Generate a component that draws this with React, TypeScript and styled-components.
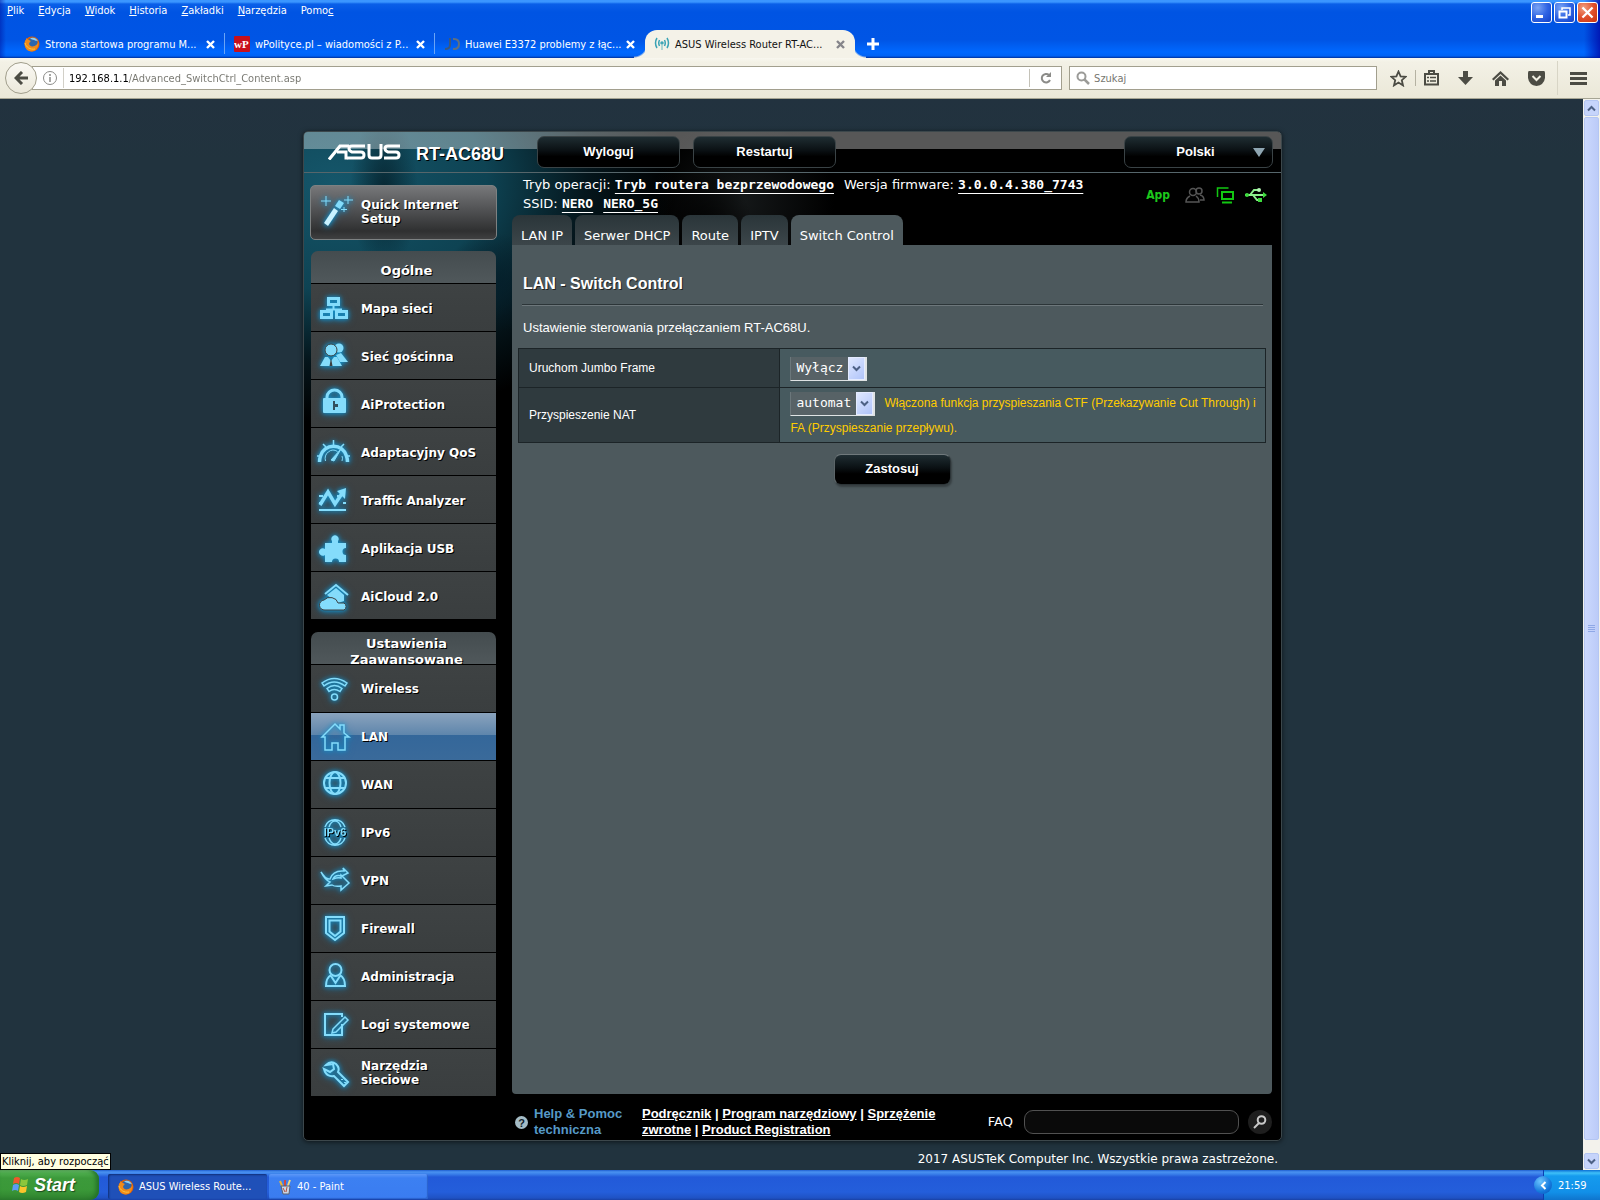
import React from "react";
import styled, { createGlobalStyle, css } from "styled-components";

const ui = `"DejaVu Sans Condensed", "Noto Sans", sans-serif`;
const wide = `"DejaVu Sans", sans-serif`;
const arial = `"Liberation Sans", Arial, sans-serif`;
const mono = `"DejaVu Sans Mono", monospace`;

const Global = createGlobalStyle`
  * { box-sizing: border-box; }
  html, body { margin: 0; height: 100%; }
  body { background: #21333e; overflow: hidden; font-family: ${ui}; }
  button, input, select { font: inherit; color: inherit; margin: 0; padding: 0; border: 0; background: none; }
  button { cursor: pointer; }
  svg { display: block; flex: none; }
`;

const Screen = styled.div`
  display: flex;
  flex-direction: column;
  height: 100vh;
  font-size: 11px;
`;

/* ---------- browser chrome ---------- */

const TitleBar = styled.header`
  position: relative;
  display: flex;
  flex-direction: column;
  justify-content: space-between;
  height: 58px;
  flex: none;
  color: #fff;
  background:
    linear-gradient(90deg, rgba(0, 20, 160, 0.5) 0, rgba(0, 20, 160, 0) 6px, rgba(0, 20, 160, 0) calc(100% - 16px), rgba(0, 10, 170, 0.8) 100%),
    linear-gradient(#3b96ff 0, #3b96ff 2px, #0a5fe8 4px, #0054e3 12px, #0055e5 40px, #0068ff 52px, #0062f5 56px, #00309c 58px);
`;

const MenuBar = styled.nav`
  display: flex;
  align-items: center;
  height: 22px;
  padding-left: 7px;
  gap: 14px;
`;

const MenuButton = styled.button`
  line-height: 16px;
  u { text-underline-offset: 1px; }
`;

const WindowButtons = styled.div`
  position: absolute;
  top: 2px;
  right: 2px;
  display: flex;
  gap: 2px;
`;

const WindowButton = styled.button<{ $danger?: boolean }>`
  display: grid;
  place-items: center;
  width: 21px;
  height: 21px;
  border: 1px solid #fff;
  border-radius: 3px;
  background: ${(p) => (p.$danger ? "radial-gradient(circle at 30% 25%, #f0a080, #e0502c 50%, #c83410)" : "radial-gradient(circle at 30% 25%, #7aa4f4, #3065e4 50%, #1040c8)")};
`;

const TabStrip = styled.div`
  display: flex;
  align-items: flex-end;
  height: 28px;
  padding-left: 15px;
`;

const BrowserTab = styled.div<{ $active?: boolean; $line?: boolean }>`
  position: relative;
  display: flex;
  align-items: center;
  gap: 5px;
  width: 210px;
  height: 28px;
  padding: 0 10px 0 9px;
  ${(p) =>
    p.$line &&
    css`
      &::after {
        content: "";
        position: absolute;
        right: 0;
        top: 3px;
        width: 1px;
        height: 21px;
        background: #6aa4f6;
      }
    `}
  ${(p) =>
    p.$active &&
    css`
      color: #111;
      background: #f4f2e8;
      border-radius: 12px 12px 0 0;
      &::before, &::after {
        content: "";
        position: absolute;
        bottom: 0;
        width: 11px;
        height: 14px;
      }
      &::before { left: -11px; background: radial-gradient(circle at 0 0, transparent 12px, #f4f2e8 14px); }
      &::after { right: -11px; background: radial-gradient(circle at 100% 0, transparent 12px, #f4f2e8 14px); }
    `}
`;

const TabTitle = styled.a`
  flex: 1;
  min-width: 0;
  color: inherit;
  text-decoration: none;
  white-space: nowrap;
`;

const IconButton = styled.button<{ $tone?: string }>`
  display: grid;
  place-items: center;
  flex: none;
  color: ${(p) => p.$tone ?? "#4c4c44"};
`;

const NewTab = styled(IconButton)`
  height: 28px;
  padding-left: 12px;
`;

const NavBar = styled.div`
  display: flex;
  align-items: center;
  flex: none;
  height: 41px;
  padding: 0 13px 0 5px;
  border-bottom: 1px solid #a6a594;
  background: linear-gradient(#f8f7f0 0, #f3f1e6 4px, #ebe8d8 100%);
`;

const BackButton = styled.button`
  display: grid;
  place-items: center;
  flex: none;
  width: 32px;
  height: 32px;
  margin-right: -5px;
  border: 1px solid #a19e8c;
  border-radius: 50%;
  background: linear-gradient(#faf9f4, #ebe8da);
  z-index: 1;
`;

const Field = styled.div<{ $grow: number }>`
  display: flex;
  align-items: center;
  flex: ${(p) => p.$grow} 1 0;
  height: 24px;
  border: 1px solid #a29f8e;
  background: #fff;
`;

const AddressField = styled(Field)`
  padding-left: 10px;
  margin-right: 7px;
`;

const Address = styled.input`
  flex: 1;
  height: 20px;
  margin-left: 6px;
  padding-left: 5px;
  border-left: 1px solid #d2d0c8;
  outline: none;
  color: transparent;
  background: linear-gradient(90deg, #000 65px, #75756e 65px);
  background-clip: text;
`;

const Reload = styled(IconButton)`
  width: 32px;
  height: 18px;
  border-left: 1px solid #c4c2b8;
`;

const SearchField = styled(Field)`
  padding-left: 6px;
  gap: 4px;
`;

const SearchInput = styled.input`
  flex: 1;
  outline: none;
  &::placeholder { color: #76766f; opacity: 1; }
`;

const NavTools = styled.div`
  display: flex;
  align-items: center;
  gap: 19px;
  margin-left: 13px;
`;

const ToolDivider = styled.span<{ $tall?: boolean }>`
  width: 1px;
  height: ${(p) => (p.$tall ? 34 : 16)}px;
  margin: 0 ${(p) => (p.$tall ? -7 : -11)}px;
  background: ${(p) => (p.$tall ? "#d8d5c6" : "#b5b2a2")};
`;

/* ---------- page viewport ---------- */

const Viewport = styled.div`
  flex: 1;
  min-height: 0;
  display: flex;
`;

const Page = styled.main`
  flex: 1;
  min-width: 0;
  overflow: hidden;
  padding: 32px 0 0 2px;
  background: linear-gradient(#22323f 0, #21333e 60px);
`;

const Scrollbar = styled.div`
  display: flex;
  flex-direction: column;
  gap: 1px;
  width: 17px;
  padding: 1px;
  background: #f3f2ec;
`;

const ScrollButton = styled.button`
  display: grid;
  place-items: center;
  height: 16px;
  border: 1px solid #b4c6f2;
  border-radius: 2px;
  color: #4d6185;
  background: #c6d4fb;
`;

const ScrollThumb = styled.div`
  display: grid;
  place-items: center;
  flex: 1;
  margin-bottom: 12px;
  border: 1px solid #b4c6f2;
  border-radius: 2px;
  background: linear-gradient(90deg, #cbd8fd, #bccbf8);
`;

/* ---------- router panel ---------- */

const Router = styled.section`
  width: 979px;
  max-width: 100%;
  margin: 0 auto;
  border: 1px solid #3c474b;
  border-radius: 5px;
  color: #fff;
  box-shadow: 0 1px 5px rgba(0, 0, 0, 0.6);
  background:
    radial-gradient(ellipse 34px 80px at 80px 60px, rgba(2, 20, 28, 0.7), transparent),
    radial-gradient(ellipse 50px 50px at 190px 150px, rgba(4, 30, 42, 0.8), transparent),
    radial-gradient(ellipse 50px 60px at 400px 100px, rgba(0, 0, 0, 0.8), transparent),
    radial-gradient(ellipse 340px 240px at 30px 50px, #15566a 0, #0e4353 45%, rgba(6, 28, 36, 0.75) 75%, transparent 100%),
    radial-gradient(circle at 440px 70px, #141718 0, transparent 90px),
    #000;
`;

const RouterHeader = styled.div`
  display: flex;
  align-items: center;
  height: 41px;
  padding: 0 8px 0 24px;
  border-bottom: 1px solid #56666b;
  border-radius: 4px 4px 0 0;
  background: linear-gradient(rgba(255, 255, 255, 0.34) 17px, transparent 17px);
`;

const Model = styled.h1`
  width: 121px;
  margin: 3px 0 0 15px;
  font: bold 18px/20px ${arial};
  text-shadow: 1px 1px 0 #000;
`;

const DarkButton = styled.button<{ $width: number }>`
  width: ${(p) => p.$width}px;
  height: 32px;
  border: 1px solid #3a4346;
  border-radius: 7px;
  font: bold 13px/16px ${arial};
  background: linear-gradient(#1f2d32 0, #0a1013 45%, #000 65%);
  text-shadow: 1px 1px 0 #000;
`;

const HeaderButton = styled(DarkButton)`
  margin-right: 13px;
`;

const LanguageBox = styled.div`
  position: relative;
  margin-left: auto;
  svg { position: absolute; right: 8px; top: 12px; pointer-events: none; }
`;

const Language = styled.select`
  appearance: none;
  width: 149px;
  height: 32px;
  padding-right: 6px;
  border: 1px solid #3a4346;
  border-radius: 7px;
  text-align: center;
  text-align-last: center;
  font: bold 13px/16px ${arial};
  background: linear-gradient(#1f2d32 0, #0a1013 45%, #000 65%);
`;

const RouterBody = styled.div`
  display: flex;
  gap: 15px;
  padding: 0 9px 0 6px;
`;

const Sidebar = styled.nav`
  flex: none;
  width: 187px;
  padding: 12px 0 44px;
  font: bold 12px/14px ${wide};
  text-shadow: 1px 1px 0 #000;
`;

const SetupLink = styled.a`
  display: flex;
  align-items: center;
  gap: 8px;
  height: 55px;
  margin-bottom: 11px;
  padding: 0 0 2px 8px;
  border: 1px solid #7d8182;
  border-radius: 5px;
  color: #fff;
  text-decoration: none;
  background: linear-gradient(#77787a, #555658 40%, #2f3031 85%, #3f4041);
`;

const MenuGroup = styled.section<{ $drop: number }>`
  margin: 0 1px;
  > a { padding-top: ${(p) => p.$drop}px; }
  & + & { margin-top: 13px; }
`;

const MenuHeading = styled.h2<{ $two?: boolean }>`
  height: 32px;
  margin: 0;
  padding: ${(p) => (p.$two ? 4 : 12)}px 26px 0 32px;
  border-radius: 7px 7px 0 0;
  font: bold 13px/16px ${wide};
  text-align: center;
  background: linear-gradient(#444c4f, #50585b);
`;

const MenuItem = styled.a<{ $active?: boolean }>`
  display: flex;
  align-items: center;
  gap: 10px;
  height: 48px;
  padding: 0 10px 0 6px;
  border-top: 1px solid #000;
  color: #fff;
  text-decoration: none;
  background: ${(p) => (p.$active ? "linear-gradient(#8aa3bd 0, #5f86ac 46%, #34679a 47%, #3a6a9a 100%)" : "linear-gradient(#3e4243, #3a3e3f)")};
  span { max-width: 120px; }
`;

const Glow = styled.svg`
  overflow: visible;
  color: #84dcfb;
  filter: drop-shadow(0 0 2px #1296cf) drop-shadow(0 1px 3px rgba(18, 130, 190, 0.7));
`;

const Main = styled.div`
  display: flex;
  flex: 1;
  min-width: 0;
  flex-direction: column;
`;

const InfoBar = styled.div`
  display: flex;
  justify-content: space-between;
  height: 42px;
  padding: 2px 5px 0 11px;
`;

const InfoText = styled.div`
  font: 13px/19px ${wide};
  white-space: nowrap;
`;

const InfoLink = styled.a<{ $gap?: boolean }>`
  margin-right: ${(p) => (p.$gap ? 10 : 0)}px;
  color: #fff;
  font: bold 13px/16px ${mono};
  text-underline-offset: 4px;
  text-decoration-skip-ink: none;
`;

const StatusIcons = styled.div`
  display: flex;
  align-items: center;
  gap: 11px;
`;

const AppLink = styled.a`
  margin-right: 4px;
  color: #1cc81c;
  font: bold 12px/16px ${ui};
  text-decoration: none;
`;

const PageTabs = styled.div`
  display: flex;
  gap: 3px;
  height: 30px;
`;

const PageTab = styled.a<{ $active?: boolean }>`
  padding: 11px 9px 0;
  border-radius: 8px 8px 0 0;
  color: #fff;
  font: 13px/19px ${wide};
  text-decoration: none;
  white-space: nowrap;
  background: ${(p) => (p.$active ? "#4d595d" : "linear-gradient(#2a3539, #3c464a)")};
`;

const Panel = styled.section`
  flex: 1;
  padding: 29px 6px 0;
  border-radius: 0 0 4px 4px;
  background: #4d595d;
`;

const PanelTitle = styled.h2`
  margin: 0 3px 15px 4px;
  padding: 0 0 10px 1px;
  border-bottom: 1px solid #2c3538;
  box-shadow: 0 1px 0 #6d777b;
  font: bold 16px/20px ${arial};
  text-shadow: 1px 1px 0 #222;
`;

const Description = styled.p`
  margin: 0 0 12px 5px;
  font: 13px/16px ${arial};
`;

const Settings = styled.table`
  width: 100%;
  border-collapse: collapse;
  font: 12px/24px ${arial};
  th, td { border: 1px solid #1c2427; padding: 7px 5px 6px 10px; text-align: left; font-weight: normal; }
  th { width: 35%; background: #2f3a3e; }
  td { background: #475a5f; }
  tr:last-child td { padding-top: 3px; padding-bottom: 2px; }
`;

const Picker = styled.span`
  position: relative;
  display: inline-flex;
  height: 24px;
  margin-right: 9px;
  vertical-align: middle;
`;

const PickerSelect = styled.select`
  appearance: none;
  height: 24px;
  padding: 0 22px 0 5px;
  border: solid #dfe3e4;
  border-width: 0 2px 1px 1px;
  border-left-color: #6b777b;
  font: 13px/20px ${mono};
  background: #576266;
`;

const PickerArrow = styled.span`
  position: absolute;
  right: 2px;
  top: 0;
  display: grid;
  place-items: center;
  width: 17px;
  height: 23px;
  border: 1px solid #e4ebff;
  color: #4d6185;
  background: linear-gradient(135deg, #dfe8ff, #b0c4fa);
  pointer-events: none;
`;

const Hint = styled.span`
  color: #fc0;
`;

const Actions = styled.div`
  display: flex;
  justify-content: center;
  padding-top: 11px;
`;

const ApplyButton = styled(DarkButton)`
  height: 31px;
  border-color: #70797c #2c3437 #2c3437 #5c6568;
  box-shadow: 1px 2px 2px rgba(0, 0, 0, 0.3);
`;

const Footer = styled.footer`
  display: flex;
  align-items: center;
  height: 46px;
  padding: 10px 0 0 3px;
  font: bold 13px/16px ${arial};
`;

const Help = styled.span`
  width: 98px;
  margin: 0 10px 0 6px;
  color: #569ac7;
`;

const FooterLinks = styled.div`
  width: 310px;
  a { color: #fff; }
`;

const FaqLabel = styled.label`
  display: flex;
  align-items: center;
  gap: 11px;
  margin-left: auto;
  font: 13px/16px ${wide};
`;

const FaqInput = styled.input`
  width: 215px;
  height: 24px;
  padding: 0 10px;
  border: 1px solid #515151;
  border-radius: 9px;
  outline: none;
  background: #0a0a0a;
`;

const RoundButton = styled.button`
  display: grid;
  place-items: center;
  width: 24px;
  height: 24px;
  margin-left: 9px;
  border-radius: 50%;
  color: #c9c9c9;
  background: #1e1e1e;
`;

const Copyright = styled.p`
  width: 979px;
  max-width: 100%;
  margin: 10px auto 0;
  padding-right: 4px;
  color: #fff;
  text-align: right;
  font: 12px/16px ${wide};
`;

/* ---------- desktop taskbar ---------- */

const Taskbar = styled.footer`
  position: relative;
  display: flex;
  flex: none;
  height: 30px;
  color: #fff;
  background: linear-gradient(#1f5fd0 0, #4a92f0 2px, #3a80ea 4px, #225ad9 7px, #245edb 22px, #1f52c4 28px, #1941a5 30px);
`;

const Tooltip = styled.div`
  position: absolute;
  left: 0;
  top: -17px;
  height: 17px;
  padding: 0 1px;
  border: 1px solid #000;
  color: #000;
  line-height: 15px;
  background: #ffffe1;
`;

const StartButton = styled.button`
  display: flex;
  align-items: center;
  gap: 5px;
  width: 99px;
  padding-left: 11px;
  border-radius: 0 9px 9px 0;
  font: italic bold 18px/24px ${arial};
  text-shadow: 1px 1px 1px #1c4a1c;
  background: linear-gradient(#7cc97a 0, #4fae4e 3px, #3c9a3b 8px, #3a9838 20px, #2f802e 30px);
  box-shadow: inset -3px 0 4px #23702a;
`;

const TaskButton = styled.button<{ $pressed?: boolean }>`
  display: flex;
  align-items: center;
  gap: 5px;
  width: 159px;
  height: 25px;
  margin: 4px 1px 0 1px;
  padding-left: 10px;
  border-radius: 2px;
  background: ${(p) => (p.$pressed ? "#1f50b8" : "linear-gradient(#5c98f8, #3c80f2 4px, #3a7cf0)")};
  box-shadow: ${(p) => (p.$pressed ? "inset 1px 1px 2px #102f78" : "inset -1px -1px 1px #2a62cc")};
`;

const TaskList = styled.div`
  display: flex;
  flex: 1;
  padding-left: 8px;
`;

const Tray = styled.div`
  display: flex;
  align-items: center;
  gap: 6px;
  width: 57px;
  border-left: 1px solid #0c3fb0;
  background: linear-gradient(#0c6fd6 0, #3fc0f8 3px, #159bee 6px, #1290e8 22px, #0f74cc 30px);
`;

const TrayArrow = styled.button`
  display: grid;
  place-items: center;
  width: 18px;
  height: 18px;
  margin-left: -10px;
  border-radius: 50%;
  background: radial-gradient(circle at 35% 30%, #6cc4ff, #1478dc 60%, #0a50b0);
`;

/* ---------- small drawings ---------- */

const Cross = ({ size = 9, width = 2.4 }: { size?: number; width?: number }) => (
  <svg width={size} height={size} viewBox="0 0 9 9" stroke="currentColor" strokeWidth={width}>
    <path d="M1 1l7 7M8 1l-7 7" />
  </svg>
);

const Firefox = () => (
  <svg width="16" height="16" viewBox="0 0 16 16">
    <circle cx="8" cy="8" r="7.500" fill="#e66000" />
    <circle cx="8.500" cy="6.500" r="5" fill="#2c66ae" />
    <path d="M6 2.500c3-2 7 0 8 3-1-1-2-.5-3-1s-3-1-5-2z" fill="#8fd0f4" />
    <path d="M1 5c1-1 1.500-2 1.500-3 1 1.500 2 2 3.500 2.500 1 .5.500 1.500-.5 2C4 9 7 11.500 10.500 10c2-1 3.500-2.500 4-4.500.5 5-2 10-7 10S-.5 10.500 1 5z" fill="#f08a1a" />
    <path d="M1 7c1 4 5 7 10 6" fill="none" stroke="#fcc840" />
  </svg>
);

const WPolityce = () => (
  <svg width="16" height="16" viewBox="0 0 16 16">
    <rect width="16" height="16" rx="1" fill="#c8101c" />
    <text x="0" y="12" fontFamily="Liberation Serif, serif" fontWeight="bold" fontSize="11" fill="#fff">wP</text>
  </svg>
);

const JdIcon = () => (
  <svg width="16" height="14" viewBox="0 0 16 14" fill="none" strokeWidth="2">
    <path d="M6 1v7q0 4-5 4" stroke="#3b587f" />
    <path d="M9 2h1q5 0 5 5t-5 5H9" stroke="#5f7080" />
  </svg>
);

const SignalIcon = () => (
  <svg width="16" height="14" viewBox="0 0 16 14" fill="none" stroke="#3aa3b5" strokeWidth="1.500">
    <path d="M3 1Q0 6 3 11M5.500 3Q4 6 5.500 9M13 1q3 5 0 10M10.500 3q1.500 3 0 6" />
    <circle cx="8" cy="6" r="1" />
    <path d="M8 7v6" stroke="#9cc" />
  </svg>
);

const Chevron = ({ dir }: { dir: "up" | "down" | "left" }) => (
  <svg width="9" height="9" viewBox="0 0 9 9" fill="none" stroke="currentColor" strokeWidth="2">
    <path d={dir === "up" ? "M1 6.500l3.500-3.500L8 6.500" : dir === "down" ? "M1 2.500L4.500 6 8 2.500" : "M6.500 1L3 4.500 6.500 8"} />
  </svg>
);

const AsusLogo = () => (
  <svg width="73" height="16" viewBox="0 0 73 16" fill="none" stroke="#fff" strokeWidth="3" role="img" aria-label="ASUS">
    <path d="M1 15.500L12 2h9" strokeWidth="3.200" />
    <path d="M9 8l9 0v7.500" strokeWidth="3" />
    <path d="M37 2H24q-3 0-3 2.500T24 8h9q3 0 3 3t-3 3H19" />
    <path d="M41 0v11q0 3 3 3h6q3 0 3-3V0" />
    <path d="M72 2H60q-3 0-3 2.500T60 8h8q3 0 3 3t-3 3H56" />
  </svg>
);

const Windows = () => (
  <svg width="18" height="18" viewBox="0 0 18 18">
    <path d="M3 2q3-2 6 0L8 8q-3-2-6 0z" fill="#f0582c" />
    <path d="M10 3q3 2 7 0l-1 6q-4 2-7 0z" fill="#8cc63c" />
    <path d="M2 9q3-2 6 0l-1 6q-3-2-6 0z" fill="#5c9cf4" />
    <path d="M9 10q3 2 7 0l-1 6q-4 2-7 0z" fill="#fcc42c" />
  </svg>
);

const PaintIcon = () => (
  <svg width="13" height="16" viewBox="0 0 13 16">
    <path d="M4 9L1 2" stroke="#e8b43c" strokeWidth="2" />
    <path d="M6 9V1" stroke="#d04c3c" strokeWidth="2" />
    <path d="M8 9l3-8" stroke="#f0d880" strokeWidth="2" />
    <path d="M2 7h9l-1 8H4z" fill="#c8d4e4" stroke="#5a6070" />
    <path d="M4 9l2 4M8 8l-1 5" stroke="#b4503c" />
  </svg>
);

const line = { fill: "none", stroke: "currentColor", strokeWidth: 1.5 };

const drawings: Record<string, React.ReactNode> = {
  map: (
    <g {...line} strokeWidth={3}>
      <path d="M11.500 6.500h10v6h-10zM4.500 19.500h10v6h-10zM19.500 19.500h10v6h-10z" />
      <path d="M16.500 13v4M9 17.500h16" strokeWidth={2} />
    </g>
  ),
  guests: (
    <g fill="currentColor">
      <circle cx="22" cy="8" r="4.500" />
      <path d="M19 15l5-2 7 9h-8z" />
      <circle cx="14" cy="10" r="6" stroke="#3c4041" />
      <path d="M3 26l5-9h3l3 4 3-4h3l5 9z" />
      <path d="M14 18l-1.500 8h3z" fill="#3c4041" />
    </g>
  ),
  lock: (
    <g>
      <path d="M10 12V9a7.500 7 0 0 1 15 0v3" fill="none" stroke="currentColor" strokeWidth="3" />
      <rect x="6" y="10" width="23" height="15" rx="1" fill="currentColor" />
      <path d="M16 13h2v3h3v3h-3v3h-2z" fill="#31505e" />
    </g>
  ),
  gauge: (
    <g fill="none" stroke="currentColor">
      <path d="M2.500 26q0-3 1-6a13.500 13.500 0 0 1 26 0q1 3 1 6" strokeWidth="3.500" />
      <path d="M8.500 25a8 8.500 0 0 1 12-9.500M25 20q1 2 0 5" strokeWidth="1" />
      <path d="M16.500 4v6M6 8l3 3M27 8l-3 3M0 20h4M33 20h-4" strokeWidth="1.500" />
      <path d="M14 24l10-11-7 12z" fill="currentColor" strokeWidth="1" />
    </g>
  ),
  traffic: (
    <g fill="none" stroke="currentColor">
      <path d="M2 26h27M2 19h4M26 19h3M2 12h4M20 12h2" strokeWidth="2" />
      <path d="M3 21l8-13 7 12 8-12" strokeWidth="3.500" />
      <path d="M20 7l9-3-1 11z" fill="currentColor" strokeWidth="0" />
    </g>
  ),
  puzzle: (
    <path
      fill="currentColor"
      d="M8 11h7v-2a3.600 3.600 0 1 1 6 0v2h8v5a3.500 3.500 0 1 0 0 7v7h-7a3.500 3.500 0 1 0-7 0H8v-7a3.700 3.700 0 1 1 0-6z"
    />
  ),
  cloud: (
    <g fill="currentColor">
      <path d="M8 14L19 5l12 10" fill="none" stroke="currentColor" strokeWidth="2" />
      <path d="M10 15l9-7 8 7v6l-6 2z" />
      <path d="M8 30a5 5 0 0 1-1-10 8 7 0 0 1 14 3h6a4 4 0 0 1 0 7z" stroke="#3c4041" strokeWidth="1" />
    </g>
  ),
  wifi: (
    <g {...line}>
      <path d="M5 11q12-9 25 0l-2 3q-11-8-21 0zM10 16.500q7.500-6 15 0l-2 3q-6-4-11 0z" />
      <circle cx="17.500" cy="25" r="3" />
    </g>
  ),
  home: (
    <g {...line}>
      <path d="M5 17L18 4l5 5V5h4v8l5 4h-4v13h-7v-7h-6v7H8V17z" />
    </g>
  ),
  globe: (
    <g {...line} strokeWidth={2}>
      <circle cx="18" cy="15" r="11" />
      <ellipse cx="18" cy="15" rx="5.500" ry="11" />
      <path d="M8 10h20M8 20h20" />
    </g>
  ),
  ipv6: (
    <g {...line}>
      <path d="M8 11a10.500 10.500 0 0 1 20 0M8 22a10.500 10.500 0 0 0 20 0M12 11q2-6 6-6t6 6M12 22q2 6 6 6t6-6" />
      <text x="18" y="20" textAnchor="middle" fill="currentColor" stroke="none" fontFamily="Liberation Sans, sans-serif" fontWeight="bold" fontSize="11">IPv6</text>
    </g>
  ),
  vpn: (
    <g {...line}>
      <path d="M4 8q5 8 9 7 3-9 14-8l-1-3 5 5-6 3q-7-2-9 3 5-2 8-1v-3l8 8-8 7v-4q-6 1-9-1l-6 1 4-4Q8 16 4 8z" />
    </g>
  ),
  shield: (
    <g {...line} strokeWidth={2}>
      <path d="M9 5h18v16l-9 7-9-7z" />
      <path d="M12.500 8.500h11v11L18 24l-5.500-4.500z" />
    </g>
  ),
  admin: (
    <g {...line} strokeWidth={2}>
      <circle cx="18.500" cy="10" r="6" />
      <path d="M14 15q-5 3-5 11h19q0-8-5-11M14 16l4.500 7L23 16" />
    </g>
  ),
  log: (
    <g {...line}>
      <path d="M25 16v11H8V6h17v3" strokeWidth={2} />
      <path d="M16 21L28 9l3 3-12 12-4 1z" />
    </g>
  ),
  wrench: (
    <g {...line} strokeWidth={2}>
      <path d="M9 9q5-5 10-1 4 4 2 8l10 10-4 4-10-10q-6 1-9-4l-1-3 6 3 4-3-1-5z" />
      <path d="M25 23v1M28 26v1" />
    </g>
  ),
  wand: (
    <g fill="currentColor">
      <path d="M5 28l10-15 4 3L9 31z" fill="#c8f2ff" />
      <path d="M16 11l4-6 5 3-4 6z" />
      <path d="M7 1v10M2 6h10M29 1v8M25 5h9M25 12v5M22 14.500h6" fill="none" stroke="currentColor" strokeWidth="1" />
    </g>
  ),
};

const NavIcon = ({ name }: { name: string }) => (
  <Glow width="34" height="34" viewBox="0 0 34 34" aria-hidden>
    {drawings[name]}
  </Glow>
);

const general = [
  ["map", "Mapa sieci"],
  ["guests", "Sieć gościnna"],
  ["lock", "AiProtection"],
  ["gauge", "Adaptacyjny QoS"],
  ["traffic", "Traffic Analyzer"],
  ["puzzle", "Aplikacja USB"],
  ["cloud", "AiCloud 2.0"],
];

const advanced = [
  ["wifi", "Wireless"],
  ["home", "LAN"],
  ["globe", "WAN"],
  ["ipv6", "IPv6"],
  ["vpn", "VPN"],
  ["shield", "Firewall"],
  ["admin", "Administracja"],
  ["log", "Logi systemowe"],
  ["wrench", "Narzędzia sieciowe"],
];

const browserTabs = [
  { icon: <Firefox />, title: "Strona startowa programu M..." },
  { icon: <WPolityce />, title: "wPolityce.pl – wiadomości z P..." },
  { icon: <JdIcon />, title: "Huawei E3372 problemy z łąc..." },
  { icon: <SignalIcon />, title: "ASUS Wireless Router RT-AC..." },
];

const Chrome = () => (
  <>
    <TitleBar>
      <MenuBar>
        <MenuButton><u>P</u>lik</MenuButton>
        <MenuButton><u>E</u>dycja</MenuButton>
        <MenuButton><u>W</u>idok</MenuButton>
        <MenuButton><u>H</u>istoria</MenuButton>
        <MenuButton><u>Z</u>akładki</MenuButton>
        <MenuButton><u>N</u>arzędzia</MenuButton>
        <MenuButton>Pomo<u>c</u></MenuButton>
      </MenuBar>
      <WindowButtons>
        <WindowButton aria-label="Minimalizuj">
          <svg width="13" height="13"><rect x="1" y="9" width="7" height="3" fill="#fff" /></svg>
        </WindowButton>
        <WindowButton aria-label="Przywróć">
          <svg width="13" height="13" fill="none" stroke="#fff" strokeWidth="1.500">
            <path d="M4 4V2h8v7h-2" />
            <path d="M1.500 5.500h7v6h-7z" strokeWidth="2" />
          </svg>
        </WindowButton>
        <WindowButton $danger aria-label="Zamknij"><Cross size={13} width={1.6} /></WindowButton>
      </WindowButtons>
      <TabStrip>
        {browserTabs.map((t, i) => (
          <BrowserTab key={t.title} $active={i === 3} $line={i < 2}>
            {t.icon}
            <TabTitle href="#">{t.title}</TabTitle>
            <IconButton $tone={i === 3 ? "#85858a" : "#fff"} aria-label="Zamknij kartę"><Cross /></IconButton>
          </BrowserTab>
        ))}
        <NewTab aria-label="Nowa karta" $tone="#fff">
          <svg width="12" height="12" stroke="currentColor" strokeWidth="3"><path d="M6 0v12M0 6h12" /></svg>
        </NewTab>
      </TabStrip>
    </TitleBar>
    <NavBar>
      <BackButton aria-label="Wstecz">
        <svg width="14" height="14" fill="none" stroke="#4c4c44" strokeWidth="3"><path d="M14 7H3M8 1L2 7l6 6" /></svg>
      </BackButton>
      <AddressField $grow={1032}>
        <svg width="14" height="14" viewBox="0 0 14 14" fill="none" stroke="#8b8b88">
          <circle cx="7" cy="7" r="6.500" />
          <path d="M7 3v2M7 6v5" strokeWidth="1.500" />
        </svg>
        <Address aria-label="Adres" defaultValue="192.168.1.1/Advanced_SwitchCtrl_Content.asp" />
        <Reload aria-label="Odśwież" $tone="#8b8b88">
          <svg width="12" height="12" viewBox="0 0 12 12" fill="none" stroke="currentColor" strokeWidth="2">
            <path d="M10 8a4.300 4.300 0 1 1-1-5" />
            <path d="M11 0v5H6z" fill="currentColor" stroke="none" />
          </svg>
        </Reload>
      </AddressField>
      <SearchField $grow={304}>
        <svg width="14" height="14" fill="none" stroke="#9b9b98" strokeWidth="2">
          <circle cx="5.500" cy="5.500" r="4" />
          <path d="M8 8l5 5" strokeWidth="2.500" />
        </svg>
        <SearchInput aria-label="Szukaj" placeholder="Szukaj" />
      </SearchField>
      <NavTools>
        <IconButton aria-label="Dodaj zakładkę">
          <svg width="17" height="17" viewBox="0 0 17 17" fill="none" stroke="currentColor" strokeWidth="1.800">
            <path d="M8.500 1.500l2.100 4.800 5 .5-3.800 3.400 1.200 5.200-4.500-2.800L4 15.400l1.200-5.200-3.800-3.400 5-.5z" />
          </svg>
        </IconButton>
        <ToolDivider />
        <IconButton aria-label="Biblioteka">
          <svg width="15" height="16" viewBox="0 0 15 16" fill="none" stroke="currentColor" strokeWidth="2">
            <path d="M1 4h13v10.500H1zM5 3V1h5v2" />
            <path d="M3 7.500h2M6 7.500h6M3 11h2M6 11h6" strokeWidth="1.500" />
          </svg>
        </IconButton>
        <IconButton aria-label="Pobrane">
          <svg width="15" height="15" viewBox="0 0 15 15" fill="currentColor"><path d="M5 0h5v6h5l-7.500 8L0 6h5z" /></svg>
        </IconButton>
        <IconButton aria-label="Strona startowa">
          <svg width="17" height="15" viewBox="0 0 17 15" fill="currentColor">
            <path d="M8.500 0L17 8l-1.500 1.500-7-6.500-7 6.500L0 8z" />
            <path d="M3 9.500l5.500-5 5.500 5V15h-4v-5H7v5H3z" />
          </svg>
        </IconButton>
        <IconButton aria-label="Pocket">
          <svg width="17" height="15" viewBox="0 0 17 15">
            <path d="M1 0h15q1 0 1 2v5q-1 7-8.500 8Q1 14 0 7V2q0-2 1-2z" fill="currentColor" />
            <path d="M4.500 5l4 4 4-4" fill="none" stroke="#f1efe2" strokeWidth="2" />
          </svg>
        </IconButton>
        <ToolDivider $tall />
        <IconButton aria-label="Menu">
          <svg width="17" height="13" stroke="currentColor" strokeWidth="3"><path d="M0 1.500h17M0 6.500h17M0 11.500h17" /></svg>
        </IconButton>
      </NavTools>
    </NavBar>
  </>
);

const Header = () => (
  <RouterHeader>
    <AsusLogo />
    <Model>RT-AC68U</Model>
    <HeaderButton $width={143}>Wyloguj</HeaderButton>
    <HeaderButton $width={143}>Restartuj</HeaderButton>
    <LanguageBox>
      <Language aria-label="Język"><option>Polski</option></Language>
      <svg width="12" height="9"><path d="M0 0h12L6 9z" fill="#8fa6b2" /></svg>
    </LanguageBox>
  </RouterHeader>
);

const SideMenu = () => (
  <Sidebar>
    <SetupLink href="#">
      <NavIcon name="wand" />
      <span>Quick Internet<br />Setup</span>
    </SetupLink>
    <MenuGroup $drop={3}>
      <MenuHeading>Ogólne</MenuHeading>
      {general.map(([icon, label]) => (
        <MenuItem href="#" key={label}><NavIcon name={icon} /><span>{label}</span></MenuItem>
      ))}
    </MenuGroup>
    <MenuGroup $drop={0}>
      <MenuHeading $two>Ustawienia Zaawansowane</MenuHeading>
      {advanced.map(([icon, label]) => (
        <MenuItem href="#" key={label} $active={label === "LAN"}><NavIcon name={icon} /><span>{label}</span></MenuItem>
      ))}
    </MenuGroup>
  </Sidebar>
);

const Info = () => (
  <InfoBar>
    <InfoText>
      Tryb operacji: <InfoLink href="#" $gap>Tryb routera bezprzewodowego</InfoLink>
      Wersja firmware: <InfoLink href="#">3.0.0.4.380_7743</InfoLink>
      <br />
      SSID: <InfoLink href="#" $gap>NERO</InfoLink>
      <InfoLink href="#">NERO_5G</InfoLink>
    </InfoText>
    <StatusIcons>
      <AppLink href="#">App</AppLink>
      <svg width="20" height="16" viewBox="0 0 20 16" fill="none" stroke="#555" strokeWidth="1.500">
        <circle cx="8" cy="5" r="3.500" />
        <circle cx="14" cy="4" r="3" />
        <path d="M5 9q-4 2-4 6h13q0-4-3-6M15 8q4 1 4 5h-4" />
      </svg>
      <svg width="18" height="18" viewBox="0 0 18 18" fill="none" stroke="#12c712" strokeWidth="2">
        <path d="M1.500 11V2h11" strokeWidth="1.500" />
        <path d="M6 6h11v7H6z" />
        <path d="M6 16.500h10" />
      </svg>
      <svg width="22" height="16" viewBox="0 0 22 16" fill="none" stroke="#8df08d" strokeWidth="2">
        <path d="M0 8h20M5 8l4-5h5M8 8l4 5h3" />
        <path d="M18 5l4 3-4 3zM0 8a2 2 0 1 0 4 0 2 2 0 1 0-4 0M13 11h4v4h-4z" fill="#3ddc3d" stroke="none" />
        <circle cx="14" cy="3" r="2" fill="#b4f5b4" stroke="none" />
      </svg>
    </StatusIcons>
  </InfoBar>
);

const Select = ({ id, value }: { id: string; value: string }) => (
  <Picker>
    <PickerSelect id={id}><option>{value}</option></PickerSelect>
    <PickerArrow><Chevron dir="down" /></PickerArrow>
  </Picker>
);

export default function App() {
  return (
    <Screen>
      <Global />
      <Chrome />
      <Viewport>
        <Page>
          <Router>
            <Header />
            <RouterBody>
              <SideMenu />
              <Main>
                <Info />
                <PageTabs>
                  {["LAN IP", "Serwer DHCP", "Route", "IPTV", "Switch Control"].map((t) => (
                    <PageTab href="#" key={t} $active={t === "Switch Control"}>{t}</PageTab>
                  ))}
                </PageTabs>
                <Panel>
                  <PanelTitle>LAN - Switch Control</PanelTitle>
                  <Description>Ustawienie sterowania przełączaniem RT-AC68U.</Description>
                  <Settings>
                    <tbody>
                      <tr>
                        <th scope="row"><label htmlFor="jumbo">Uruchom Jumbo Frame</label></th>
                        <td><Select id="jumbo" value="Wyłącz" /></td>
                      </tr>
                      <tr>
                        <th scope="row"><label htmlFor="nat">Przyspieszenie NAT</label></th>
                        <td>
                          <Select id="nat" value="automat" />
                          <Hint>Włączona funkcja przyspieszania CTF (Przekazywanie Cut Through) i FA (Przyspieszanie przepływu).</Hint>
                        </td>
                      </tr>
                    </tbody>
                  </Settings>
                  <Actions><ApplyButton $width={117}>Zastosuj</ApplyButton></Actions>
                </Panel>
                <Footer>
                  <svg width="13" height="13" viewBox="0 0 13 13">
                    <circle cx="6.500" cy="6.500" r="6.500" fill="#a5bcc6" />
                    <text x="6.500" y="10.500" textAnchor="middle" fontFamily="Liberation Sans, sans-serif" fontWeight="bold" fontSize="11" fill="#10202a">?</text>
                  </svg>
                  <Help>Help &amp; Pomoc techniczna</Help>
                  <FooterLinks>
                    <a href="#">Podręcznik</a> | <a href="#">Program narzędziowy</a> | <a href="#">Sprzężenie zwrotne</a> | <a href="#">Product Registration</a>
                  </FooterLinks>
                  <FaqLabel>FAQ<FaqInput /></FaqLabel>
                  <RoundButton aria-label="Szukaj w FAQ">
                    <svg width="14" height="14" fill="none" stroke="currentColor" strokeWidth="2">
                      <circle cx="8.500" cy="5" r="3.800" />
                      <path d="M6 8l-5 5" />
                    </svg>
                  </RoundButton>
                </Footer>
              </Main>
            </RouterBody>
          </Router>
          <Copyright>2017 ASUSTeK Computer Inc. Wszystkie prawa zastrzeżone.</Copyright>
        </Page>
        <Scrollbar>
          <ScrollButton aria-label="W górę"><Chevron dir="up" /></ScrollButton>
          <ScrollThumb>
            <svg width="8" height="8" stroke="#8fa8e6"><path d="M0 .5h7M0 2.500h7M0 4.500h7M0 6.500h7" /></svg>
          </ScrollThumb>
          <ScrollButton aria-label="W dół"><Chevron dir="down" /></ScrollButton>
        </Scrollbar>
      </Viewport>
      <Taskbar>
        <Tooltip role="tooltip">Kliknij, aby rozpocząć</Tooltip>
        <StartButton><Windows />Start</StartButton>
        <TaskList>
          <TaskButton $pressed><Firefox />ASUS Wireless Route...</TaskButton>
          <TaskButton><PaintIcon />40 - Paint</TaskButton>
        </TaskList>
        <Tray>
          <TrayArrow aria-label="Pokaż ukryte ikony"><Chevron dir="left" /></TrayArrow>
          <time>21:59</time>
        </Tray>
      </Taskbar>
    </Screen>
  );
}
